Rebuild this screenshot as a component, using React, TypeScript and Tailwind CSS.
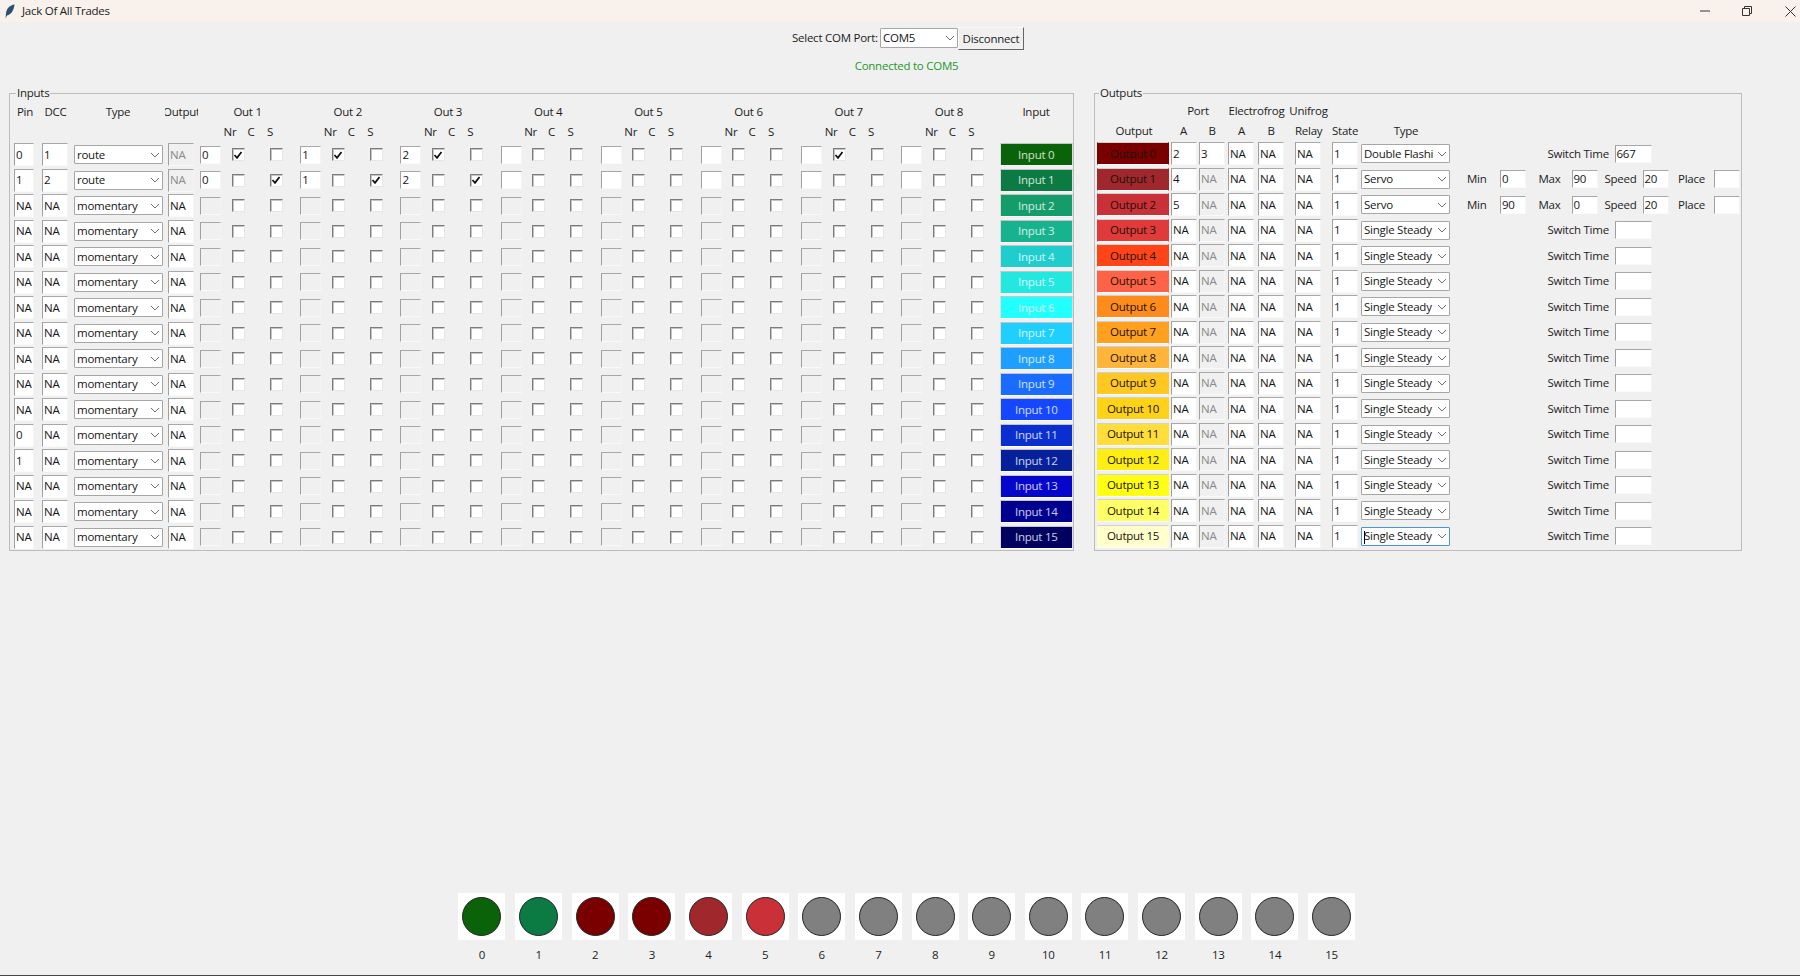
import { ReactNode } from "react";

const inputRowGrid = "grid h-[25.5px] grid-cols-[28px_32px_94px_32px_repeat(8,100.2px)_72px] items-center";
const outputRowGrid = "grid h-[25.5px] grid-cols-[74px_28px_29px_30px_37px_37px_29px_105px_1fr] items-center";

const enabled = "bg-white text-[#161616]";
const disabled = "bg-[#f0f0f0] text-[#8a8a8a]";

const inputColors = [
  "bg-[#0a6308]", "bg-[#0b7a43]", "bg-[#149c6a]", "bg-[#17b38e]",
  "bg-[#1fcdcd]", "bg-[#22e8e0]", "bg-[#22ffff]", "bg-[#1fcfff]",
  "bg-[#1e9fff]", "bg-[#1a6bff]", "bg-[#1447ff]", "bg-[#0a2fd0]",
  "bg-[#05209a]", "bg-[#0505cc]", "bg-[#000090]", "bg-[#000060]",
];

const outputColors = [
  "bg-[#7a0000]", "bg-[#a0282c]", "bg-[#c93038]", "bg-[#e03a3a]",
  "bg-[#ff4518]", "bg-[#ff6347]", "bg-[#ff8c1a]", "bg-[#ffa01f]",
  "bg-[#ffb53a]", "bg-[#ffc820]", "bg-[#ffd21a]", "bg-[#ffdd3a]",
  "bg-[#ffee14]", "bg-[#ffff14]", "bg-[#ffff66]", "bg-[#ffffcc]",
];

const lightColors = [
  "bg-[#0a6308]", "bg-[#0b7a43]", "bg-[#7a0000]", "bg-[#7a0000]",
  "bg-[#a0282c]", "bg-[#c93038]", "bg-[#808080]", "bg-[#808080]",
  "bg-[#808080]", "bg-[#808080]", "bg-[#808080]", "bg-[#808080]",
  "bg-[#808080]", "bg-[#808080]", "bg-[#808080]", "bg-[#808080]",
];

const pins = ["0", "1", "NA", "NA", "NA", "NA", "NA", "NA", "NA", "NA", "NA", "0", "1", "NA", "NA", "NA"];
const checkedNr: Record<string, boolean> = { "0-0": true, "0-1": true, "0-2": true, "0-6": true };
const checkedS: Record<string, boolean> = { "1-0": true, "1-1": true, "1-2": true };

const Entry = ({ value = "", className = "" }: { value?: string; className?: string }) => (
  <div
    className={`flex items-center whitespace-nowrap border border-t-[#a8a8a8] border-l-[#a0a0a0] border-r-[#f4f4f4] border-b-[#fafafa] pl-[1px] ${className}`}
  >
    {value}
  </div>
);

const Check = ({ on = false }: { on?: boolean }) => (
  <div className="flex h-[13px] w-[13px] items-center justify-center border border-t-[#7c7c7c] border-l-[#7c7c7c] border-r-[#e6e6e6] border-b-[#e6e6e6] bg-white shadow-[inset_1px_1px_0_#c4c4c4]">
    {on && (
      <svg width="10" height="10" viewBox="0 0 10 10">
        <path d="M1.5 5 L4 7.8 L8.5 2" fill="none" stroke="#111" strokeWidth="1.8" />
      </svg>
    )}
  </div>
);

const Combo = ({ value, className = "", focused = false }: { value: string; className?: string; focused?: boolean }) => (
  <div
    className={`flex items-center justify-between rounded-[1px] border bg-white pl-[2px] pr-[2px] text-[#161616] ${focused ? "border-[#4a96dc]" : "border-[#a6a6a6]"} ${className}`}
  >
    <span className="whitespace-nowrap">
      {focused && <span className="mr-[-1px] inline-block h-[13px] w-[1px] bg-black align-middle" />}
      {value}
    </span>
    <svg width="10" height="6" viewBox="0 0 10 6" className="shrink-0">
      <path d="M1 1 L5 5 L9 1" fill="none" stroke="#707070" strokeWidth="1" />
    </svg>
  </div>
);

const OutHeader = ({ n }: { n: number }) => (
  <div className="pr-[5px] text-center">Out {n}</div>
);

const SubHeader = () => (
  <div className="flex">
    <span className="ml-[20px] w-[20px] text-center">Nr</span>
    <span className="ml-[6px] w-[10px] text-center">C</span>
    <span className="ml-[9px] w-[10px] text-center">S</span>
  </div>
);

const InputsPanel = () => (
  <fieldset className="h-[466px] w-[1065px] min-w-0 border border-[#bcbcbc] pl-[4px]">
    <legend className="ml-[2px] h-[16px] px-[1px] leading-[16px]">Inputs</legend>
    <div className={`${inputRowGrid} mt-[1px] !h-[20px]`}>
      <div className="pr-[6px] text-center">Pin</div>
      <div className="pr-[5px] text-center">DCC</div>
      <div className="pr-[6px] text-center">Type</div>
      <div className="ml-[-3px] flex w-[33px] justify-center overflow-hidden whitespace-nowrap">Output</div>
      {[1, 2, 3, 4, 5, 6, 7, 8].map((n) => (
        <OutHeader key={n} n={n} />
      ))}
      <div className="pr-[3px] text-center">Input</div>
    </div>
    <div className={`${inputRowGrid} !h-[20px]`}>
      <div />
      <div />
      <div />
      <div />
      {[1, 2, 3, 4, 5, 6, 7, 8].map((n) => (
        <SubHeader key={n} />
      ))}
      <div />
    </div>
    {pins.map((pin, row) => {
      const routed = row < 2;
      return (
        <div key={row} className={inputRowGrid}>
          <Entry value={pin} className={`h-[23px] w-[20px] ${enabled}`} />
          <Entry value={routed ? String(row + 1) : "NA"} className={`h-[23px] w-[26px] ${enabled}`} />
          <Combo value={routed ? "route" : "momentary"} className="h-[19px] w-[89px]" />
          <Entry value="NA" className={`h-[23px] w-[26px] ${routed ? disabled : enabled}`} />
          {[0, 1, 2, 3, 4, 5, 6, 7].map((g) => (
            <div key={g} className="flex items-center">
              <Entry
                value={routed && g < 3 ? (g === 0 ? "0" : String(g)) : ""}
                className={`h-[18px] w-[21px] ${routed ? enabled : disabled}`}
              />
              <div className="ml-[10.5px]">
                <Check on={checkedNr[`${row}-${g}`]} />
              </div>
              <div className="ml-[25px]">
                <Check on={checkedS[`${row}-${g}`]} />
              </div>
            </div>
          ))}
          <div
            className={`ml-[-1.5px] flex h-[23px] w-[72.5px] items-center justify-center border border-t-[#c4c4c4] border-l-[#dcdcdc] border-r-[#dcdcdc] border-b-white text-white/80 ${inputColors[row]}`}
          >
            Input {row}
          </div>
        </div>
      );
    })}
  </fieldset>
);

const switchTimes: Record<number, string> = { 0: "667" };
const ports = ["2", "4", "5"];
const portsB = ["3"];

const ServoFields = ({ min, max }: { min: string; max: string }) => (
  <div className="ml-[1px] flex items-center">
    <span className="w-[33px]">Min</span>
    <Entry value={min} className={`h-[18px] w-[26px] ${enabled}`} />
    <span className="ml-[12.5px] w-[33px]">Max</span>
    <Entry value={max} className={`h-[18px] w-[26px] ${enabled}`} />
    <span className="ml-[7px] w-[38px]">Speed</span>
    <Entry value="20" className={`h-[18px] w-[26px] ${enabled}`} />
    <span className="ml-[9.5px] w-[36px]">Place</span>
    <Entry className={`h-[18px] w-[26px] ${enabled}`} />
  </div>
);

const OutputsPanel = () => (
  <fieldset className="h-[466px] w-[648px] min-w-0 border border-[#bcbcbc] pl-[2px]">
    <legend className="ml-[2px] h-[16px] px-[1px] leading-[16px]">Outputs</legend>
    <div className="flex h-[20px] items-center">
      <span className="ml-[86px] w-[30px] text-center">Port</span>
      <span className="ml-[12px] w-[63px] whitespace-nowrap text-center">Electrofrog</span>
      <span className="ml-[1px] w-[39px] whitespace-nowrap text-center">Unifrog</span>
    </div>
    <div className={`${outputRowGrid} !h-[20px]`}>
      <div className="text-center">Output</div>
      <div className="pr-[3px] text-center">A</div>
      <div className="pr-[3px] text-center">B</div>
      <div className="pr-[3px] text-center">A</div>
      <div className="pr-[11px] text-center">B</div>
      <div className="pr-[11px] text-center">Relay</div>
      <div className="pr-[3px] text-center">State</div>
      <div className="pr-[15px] text-center">Type</div>
      <div />
    </div>
    {outputColors.map((color, row) => {
      const servo = row === 1 || row === 2;
      return (
        <div key={row} className={outputRowGrid}>
          <div
            className={`flex h-[23px] w-[72px] items-center justify-center border border-t-[#d0d0d0] border-b-white border-x-transparent text-[#1a1208] ${color}`}
          >
            Output {row}
          </div>
          <Entry value={ports[row] ?? "NA"} className={`h-[23px] w-[26px] ${enabled}`} />
          <Entry value={portsB[row] ?? "NA"} className={`h-[23px] w-[26px] ${row === 0 ? enabled : disabled}`} />
          <Entry value="NA" className={`h-[23px] w-[26px] ${enabled}`} />
          <Entry value="NA" className={`h-[23px] w-[26px] ${enabled}`} />
          <Entry value="NA" className={`h-[23px] w-[26px] ${enabled}`} />
          <Entry value="1" className={`h-[23px] w-[26px] ${enabled}`} />
          <Combo
            value={row === 0 ? "Double Flashi" : servo ? "Servo" : "Single Steady"}
            className="h-[19px] w-[89px]"
            focused={row === 15}
          />
          {servo ? (
            <ServoFields min={row === 1 ? "0" : "90"} max={row === 1 ? "90" : "0"} />
          ) : (
            <div className="ml-[81.5px] flex items-center">
              <span className="w-[67px] whitespace-nowrap">Switch Time</span>
              <Entry value={switchTimes[row] ?? ""} className={`h-[18px] w-[37px] ${enabled}`} />
            </div>
          )}
        </div>
      );
    })}
  </fieldset>
);

export default function App() {
  return (
    <div className="flex h-[976px] w-[1800px] flex-col overflow-hidden border-b border-[#4a4640] bg-[#f0f0f0] font-['Open_Sans',sans-serif] text-[11.5px] leading-[16px] tracking-[-0.25px] text-[#1c1c1c]">
      <div className="flex h-[22px] items-center bg-[#f8f1ec] pl-[5px]">
        <svg width="10" height="15" viewBox="0 0 10 15">
          <path d="M9.5 0.5 C5 1 1.5 4.5 1 9.5 L0.5 14.5 L2 11.5 C6 11 9 6 9.5 0.5 Z" fill="#2a5078" />
        </svg>
        <span className="ml-[7px]">Jack Of All Trades</span>
        <div className="ml-auto flex items-center">
          <svg width="10" height="10" viewBox="0 0 10 10" className="mr-[32px]">
            <path d="M0 5 H10" stroke="#333" strokeWidth="1" />
          </svg>
          <svg width="10" height="10" viewBox="0 0 10 10" className="mr-[33px]">
            <path d="M2.5 2 V0.5 H9.5 V7.5 H8 M0.5 2.5 H7.5 V9.5 H0.5 Z" fill="none" stroke="#333" strokeWidth="1" />
          </svg>
          <svg width="11" height="11" viewBox="0 0 11 11" className="mr-[4px]">
            <path d="M0.5 0.5 L10.5 10.5 M10.5 0.5 L0.5 10.5" stroke="#333" strokeWidth="1" />
          </svg>
        </div>
      </div>

      <div className="mt-[5px] flex h-[23px] items-center pl-[792px]">
        <span className="mb-[2px] w-[88px] whitespace-nowrap">Select COM Port:</span>
        <Combo value="COM5" className="mb-[2px] h-[20px] w-[78px]" />
        <button className="h-[23px] w-[66px] border border-t-[#fafafa] border-l-[#fafafa] border-r-[#666] border-b-[#666] bg-[#f0f0f0]">
          Disconnect
        </button>
      </div>
      <div className="mt-[8px] flex h-[16px] items-center justify-center pl-[13px] text-[#1a9a2a]">Connected to COM5</div>

      <div className="mt-[11px] flex gap-[20px] pl-[9px]">
        <InputsPanel />
        <OutputsPanel />
      </div>

      <div className="mt-auto mb-[12px] flex justify-center gap-[9.65px] pl-[13.5px]">
        {lightColors.map((color, i) => (
          <div key={i} className="flex w-[47px] flex-col items-center">
            <div className="flex h-[47px] w-[47px] items-center justify-center bg-white">
              <div className={`h-[39px] w-[39px] rounded-full border border-[#222] ${color}`} />
            </div>
            <div className="mt-[7px] flex h-[16px] items-center">{i}</div>
          </div>
        ))}
      </div>
    </div>
  );
}
